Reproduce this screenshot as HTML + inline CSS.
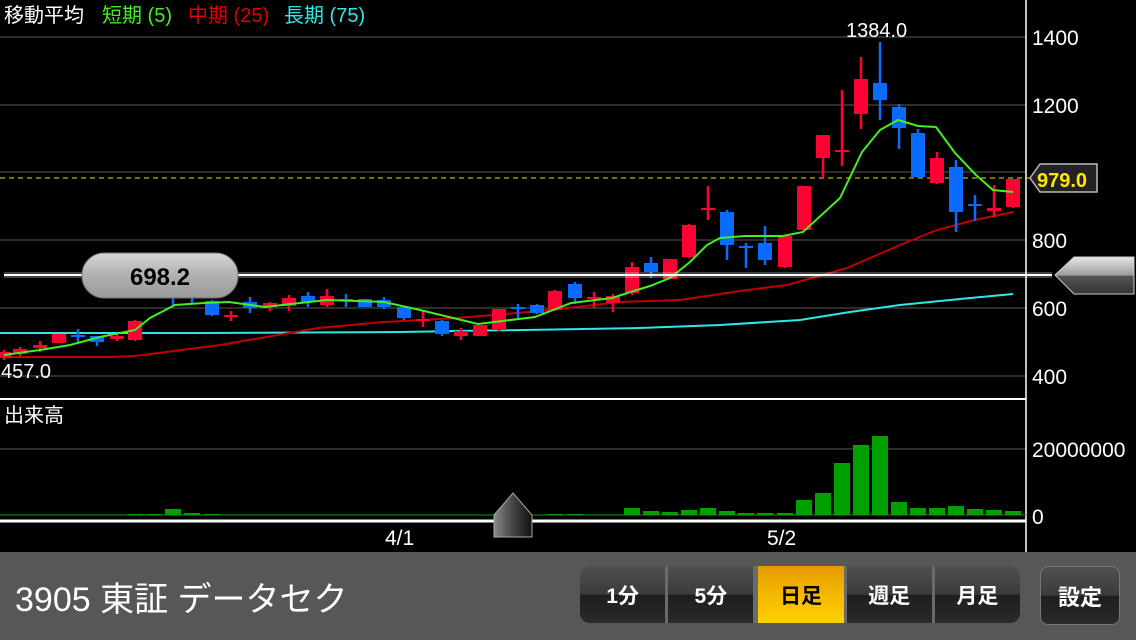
<!DOCTYPE html>
<html><head><meta charset="utf-8"><style>
body{margin:0;width:1136px;height:640px;overflow:hidden;background:#000;font-family:"Liberation Sans","Noto Sans CJK JP",sans-serif}
svg{position:absolute;left:0;top:0}
.bar{position:absolute;left:0;top:552px;width:1136px;height:88px;background:#575757}
.title{position:absolute;left:15px;top:572px;color:#fff;font-size:34px;white-space:nowrap}
.seg{position:absolute;top:566px;height:57px;border-radius:10px;overflow:hidden;display:flex;left:580px;width:440px;background:linear-gradient(#505050,#3a3a3a 50%,#1e1e1e 51%,#2a2a2a)}
.seg div{flex:1;color:#fff;font-weight:bold;font-size:21px;display:flex;align-items:center;justify-content:center;border-right:3px solid #6a6a6a}
.seg div:last-child{border-right:none}
.seg .on{background:linear-gradient(#e69a00,#f3b800 50%,#ffd000);color:#000;border-left:2px solid #6a6a6a}
.set{position:absolute;left:1040px;top:566px;width:80px;height:59px;border-radius:8px;background:linear-gradient(#505050,#3a3a3a 50%,#1e1e1e 51%,#2a2a2a);color:#fff;font-weight:bold;font-size:22px;display:flex;align-items:center;justify-content:center;border:1px solid #777;box-sizing:border-box}
</style></head><body>
<svg id="s" width="1136" height="552" viewBox="0 0 1136 552" font-family="Liberation Sans, Noto Sans CJK JP, sans-serif">
<g stroke="#5a5a5a" stroke-width="1">
<line x1="0" y1="37" x2="1026" y2="37"/><line x1="0" y1="105" x2="1026" y2="105"/><line x1="0" y1="172" x2="1026" y2="172"/><line x1="0" y1="240" x2="1026" y2="240"/><line x1="0" y1="308" x2="1026" y2="308"/><line x1="0" y1="376" x2="1026" y2="376"/><line x1="0" y1="449" x2="1026" y2="449"/>
</g>
<line x1="1026" y1="0" x2="1026" y2="552" stroke="#fff" stroke-width="1.5"/>
<line x1="0" y1="399" x2="1026" y2="399" stroke="#fff" stroke-width="2"/>
<line x1="0" y1="178" x2="1030" y2="178" stroke="#e5e500" stroke-width="1" stroke-dasharray="5,4"/>
<g id="vol" fill="#00a000"></g>
<line x1="0" y1="515" x2="1026" y2="515" stroke="#00a000" stroke-width="1"/>
<line x1="0" y1="521" x2="1026" y2="521" stroke="#fff" stroke-width="3"/>
<polyline fill="none" stroke="#2ee8e8" stroke-width="2" points="0,333 200,333 400,332 640,328 720,325 800,320 850,312 900,305 960,299 1013,294"/>
<polyline fill="none" stroke="#c00000" stroke-width="2" points="0,357 110,357 135,356 220,345 318,328 384,322 457,318 540,311 620,302 680,300 740,291 787,285 847,268 900,245 937,230 975,220 1013,212"/>
<g id="cd"></g>
<polyline fill="none" stroke="#44ee22" stroke-width="2" points="4,355 40,350 70,345 100,337 135,330 150,318 175,305 204,303 229,302 265,307 300,303 327,300 384,302 420,310 478,324 535,317 571,303 612,298 637,290 650,286 670,278 690,262 707,245 720,238 745,236 783,236 803,232 840,198 862,152 880,130 898,120 918,126 936,127 955,153 976,175 993,190 1013,192"/>
<text x="4" y="22" font-size="20" fill="#fff">移動平均</text>
<text x="102" y="22" font-size="20" fill="#44ee22">短期 (5)</text>
<text x="188" y="22" font-size="20" fill="#e00000">中期 (25)</text>
<text x="284" y="22" font-size="20" fill="#2ee8e8">長期 (75)</text>
<text x="846" y="37" font-size="20" fill="#fff">1384.0</text>
<text x="1" y="378" font-size="20" fill="#fff">457.0</text>
<text x="4" y="422" font-size="20" fill="#fff">出来高</text>
<g font-size="21" fill="#fff">
<text x="1032" y="45">1400</text><text x="1032" y="113">1200</text><text x="1032" y="248">800</text><text x="1032" y="316">600</text><text x="1032" y="384">400</text><text x="1032" y="457">20000000</text><text x="1032" y="524">0</text>
<text x="385" y="545">4/1</text><text x="767" y="545">5/2</text>
</g>
<path d="M1030,178 L1040,164 L1097,164 L1097,192 L1040,192 Z" fill="#222" stroke="#bbb" stroke-width="1.5"/>
<text x="1037" y="187" font-size="20" font-weight="bold" fill="#ffe600">979.0</text>
<line x1="4" y1="275" x2="1052" y2="275" stroke="#fff" stroke-width="6" opacity="0.25"/>
<line x1="4" y1="275" x2="1052" y2="275" stroke="#fff" stroke-width="2"/>
<defs><linearGradient id="g1" x1="0" y1="0" x2="0" y2="1"><stop offset="0" stop-color="#d8d8d8"/><stop offset="0.5" stop-color="#b0b0b0"/><stop offset="1" stop-color="#999"/></linearGradient>
<linearGradient id="g2" x1="0" y1="0" x2="1" y2="0"><stop offset="0" stop-color="#888"/><stop offset="0.5" stop-color="#444"/><stop offset="1" stop-color="#111"/></linearGradient>
<linearGradient id="g3" x1="0" y1="0" x2="0" y2="1"><stop offset="0" stop-color="#e8e8e8"/><stop offset="0.5" stop-color="#9a9a9a"/><stop offset="0.51" stop-color="#555"/><stop offset="1" stop-color="#333"/></linearGradient></defs>
<rect x="82" y="253" width="156" height="45" rx="22" fill="url(#g1)" stroke="#777"/>
<text x="160" y="285" font-size="24" font-weight="bold" fill="#000" text-anchor="middle">698.2</text>
<path d="M1055,275 L1074,257 L1134,257 L1134,294 L1074,294 Z" fill="url(#g3)" stroke="#ccc" stroke-width="1"/>
<path d="M494,515 L513,493 L532,515 L532,537 L494,537 Z" fill="url(#g2)" stroke="#aaa" stroke-width="1"/>
</svg>
<div class="bar"></div>
<div class="title">3905 東証 データセク</div>
<div class="seg"><div>1分</div><div>5分</div><div class="on">日足</div><div>週足</div><div>月足</div></div>
<div class="set">設定</div>
<script>
var C=[[4,'r',352,358,350,360],[20,'r',349,354,347,356],[40,'r',345,348,341,352],[59,'r',334,343,334,343],[78,'b',335,337,329,343],[97,'b',336,342,336,346],[117,'r',336,339,333,341],[135,'r',321,340,320,341],[154,'r',287,293,285,296],[173,'b',290,293,284,306],[192,'b',293,296,290,303],[212,'b',301,315,300,316],[231,'r',315,317,311,321],[250,'b',302,308,297,313],[270,'r',303,307,302,311],[289,'r',298,306,295,311],[308,'b',296,302,292,307],[327,'r',296,305,289,307],[346,'b',299,301,294,307],[365,'b',299,307,299,307],[384,'b',300,307,297,309],[404,'b',307,318,306,320],[423,'r',319,321,311,327],[442,'b',321,334,320,336],[461,'r',331,336,328,340],[480,'r',325,336,325,336],[499,'r',309,330,309,331],[518,'b',307,309,304,318],[537,'b',305,313,304,314],[555,'r',291,310,290,311],[575,'b',284,298,282,304],[594,'r',297,299,292,308],[613,'r',296,303,294,312],[632,'r',267,293,262,295],[651,'b',263,272,257,278],[670,'r',259,279,259,279],[689,'r',225,257,224,258],[708,'r',208,210,186,220],[727,'b',212,245,210,260],[746,'b',246,248,243,268],[765,'b',243,260,226,265],[785,'r',236,267,236,268],[804,'r',186,230,186,231],[823,'r',135,158,135,178],[842,'r',150,152,90,166],[861,'r',79,114,57,129],[880,'b',83,100,42,120],[899,'b',107,128,104,149],[918,'b',133,177,129,178],[937,'r',158,183,152,184],[956,'b',167,212,160,232],[975,'b',204,206,195,221],[994,'r',208,211,185,217],[1013,'r',179,207,179,208]];
var h='';C.forEach(function(c){var col=c[1]=='r'?'#ff0033':'#0a6cff';var bh=Math.max(c[3]-c[2],2);
h+='<line x1="'+c[0]+'" y1="'+c[4]+'" x2="'+c[0]+'" y2="'+c[5]+'" stroke="'+col+'" stroke-width="2.5"/>';
h+='<rect x="'+(c[0]-7)+'" y="'+c[2]+'" width="14" height="'+bh+'" fill="'+col+'"/>';});
document.getElementById('cd').innerHTML=h;
var V={135:1,154:1,173:6,192:2,212:1,555:1,575:1,632:7,651:4,670:3,689:5,708:7,727:4,746:2,765:2,785:2,804:15,823:22,842:52,861:70,880:79,899:13,918:7,937:7,956:9,975:6,994:5,1013:4};
var v='';for(var k in V){v+='<rect x="'+(k-8)+'" y="'+(515-V[k])+'" width="16" height="'+V[k]+'"/>';}
document.getElementById('vol').innerHTML=v;
</script>
</body></html>
